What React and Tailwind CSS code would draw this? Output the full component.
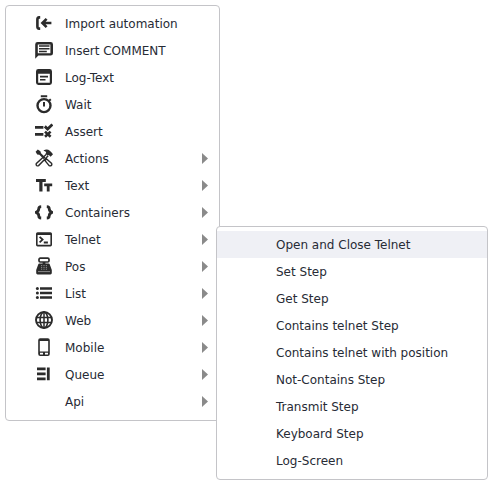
import React from "react";

const icons = {
  import: (
    <g fill="none" stroke="currentColor" strokeWidth="2.6">
      <path d="M5.2 3.4H4.2Q2.4 3.6 2.4 5.6V12.4Q2.4 14.4 4.2 14.6H5.2" />
      <path d="M16.4 9H7.6M11.6 4.8L7.4 9L11.6 13.2" />
    </g>
  ),
  comment: (
    <>
      <path
        fillRule="evenodd"
        fill="currentColor"
        d="M2.6 1H15.6Q18 1 18 3.4V12.2Q18 14.6 15.6 14.6H3.4L.2 17.8V3.4Q.2 1 2.6 1ZM2.8 3.4V12.2H15.4V3.4Z"
      />
      <path stroke="currentColor" strokeWidth="1.5" d="M4 5H14.5M4 7.7H14.5M4 10.4H11.8" />
    </>
  ),
  log: (
    <>
      <path
        fillRule="evenodd"
        fill="currentColor"
        d="M3.4 1H14.6Q17 1 17 3.4V14.6Q17 17 14.6 17H3.4Q1 17 1 14.6V3.4Q1 1 3.4 1ZM3.2 5.8V14.8H14.8V5.8Z"
      />
      <path stroke="currentColor" strokeWidth="1.6" d="M5 8.6H13M5 11.8H10.5" />
    </>
  ),
  wait: (
    <>
      <circle cx="9" cy="10.6" r="6.5" fill="none" stroke="currentColor" strokeWidth="2.4" />
      <path stroke="currentColor" strokeWidth="2" d="M5.8 1.2H12.2M9 7V11.6M13.8 6L15.8 4.2" />
    </>
  ),
  assert: (
    <g fill="none" stroke="currentColor">
      <path strokeWidth="2.8" d="M0 5.4H8.4M0 12.4H8.4" />
      <path strokeWidth="2.8" d="M9.8 4.4L12.6 7L17.4 2.4" />
      <path strokeWidth="2.6" d="M10 9.6L15.6 14.8M15.6 9.6L10 14.8" />
    </g>
  ),
  actions: (
    <>
      <path fill="currentColor" d="M8.4 1.6Q12 -.8 14.8 1.8L16.6 3.4L18 5.2L15.6 7.8L13.8 6L12.4 6.6L10.6 4.8L11.2 3Z" />
      <path fill="currentColor" d="M.6 2.8L2.8.6L5.4 2.2L6 4.2L10.4 8.6L8.8 10.2L4.4 5.8L2.2 5.4Z" />
      <path
        fill="none"
        stroke="currentColor"
        strokeWidth="1.4"
        d="M11.4 5.2L1.4 14.4Q.8 15.6 1.6 16.4Q2.5 17.2 3.6 16.6L13.2 6.8M10 11.6L11.6 10L16.4 14.2Q17.2 15.6 16.4 16.4Q15.4 17.2 14.2 16.6Z"
      />
    </>
  ),
  text: (
    <path fill="currentColor" d="M1 3H10.8V6H7.5V15.4H4.3V6H1ZM9.2 7.4H17.2V10.2H14.6V15.4H11.8V10.2H9.2Z" />
  ),
  braces: (
    <g fill="none" stroke="currentColor" strokeWidth="2.8">
      <path d="M6.2 3.6Q3.8 3.7 3.8 5.6Q3.8 8.4 1 9.3Q3.8 10.2 3.8 13Q3.8 14.9 6.2 15" />
      <path d="M11.8 3.6Q14.2 3.7 14.2 5.6Q14.2 8.4 17 9.3Q14.2 10.2 14.2 13Q14.2 14.9 11.8 15" />
    </g>
  ),
  telnet: (
    <>
      <path
        fillRule="evenodd"
        fill="currentColor"
        d="M2.6 2.2H15.4Q17 2.2 17 3.8V14.8Q17 16.4 15.4 16.4H2.6Q1 16.4 1 14.8V3.8Q1 2.2 2.6 2.2ZM2.6 5V14.8H15.4V5Z"
      />
      <path fill="none" stroke="currentColor" strokeWidth="1.8" d="M4.6 6.9L7.6 9.6L4.6 12.3M8.8 12.5H12.9" />
    </>
  ),
  pos: (
    <>
      <rect x="4" y="1.2" width="10" height="3.8" rx="1.2" fill="none" stroke="currentColor" strokeWidth="1.7" />
      <path
        fill="currentColor"
        d="M7.6 5H10.4V6.4H13.6Q14.6 6.4 14.8 7.4L16.8 13V16Q16.8 17.4 15.4 17.4H2.6Q1.2 17.4 1.2 16V13L3.2 7.4Q3.4 6.4 4.4 6.4H7.6Z"
      />
      <path stroke="#fff" strokeWidth=".9" strokeDasharray="1.2 1.2" d="M6 8.6H12.2M6 10.4H12.2M6 12.2H12.2" opacity=".5" />
      <path stroke="#fff" strokeWidth=".9" d="M3 14.6H15" opacity=".5" />
    </>
  ),
  list: (
    <>
      <path stroke="currentColor" strokeWidth="2.4" d="M5 4.5H17M5 9H17M5 13.5H17" />
      <g fill="currentColor">
        <circle cx="2.4" cy="4.5" r="1.5" />
        <circle cx="2.4" cy="9" r="1.5" />
        <circle cx="2.4" cy="13.5" r="1.5" />
      </g>
    </>
  ),
  web: (
    <g fill="none" stroke="currentColor" strokeWidth="1.9">
      <circle cx="9" cy="9" r="8" />
      <ellipse cx="9" cy="9" rx="3.9" ry="7.9" strokeWidth="1.6" />
      <path strokeWidth="1.5" d="M9 1V17M1.6 6.4H16.4M1.6 11.6H16.4" />
    </g>
  ),
  mobile: (
    <path
      fillRule="evenodd"
      fill="currentColor"
      d="M5.2 .3H12.8Q14.8 .3 14.8 2.3V16Q14.8 18 12.8 18H5.2Q3.2 18 3.2 16V2.3Q3.2 .3 5.2 .3ZM4.8 3V13.4H13.2V3ZM5 14.8V16.4H8V14.8ZM10 14.8V16.4H13V14.8Z"
    />
  ),
  queue: (
    <path fill="currentColor" d="M2 2.6H10.6V5.2H2ZM2 7.6H10.6V10.2H2ZM2 12.6H10.6V15.2H2ZM11.9 2.6H14.7V15.2H11.9Z" />
  ),
};

const telnetItems = [
  "Open and Close Telnet",
  "Set Step",
  "Get Step",
  "Contains telnet Step",
  "Contains telnet with position",
  "Not-Contains Step",
  "Transmit Step",
  "Keyboard Step",
  "Log-Screen",
];

const items = [
  { label: "Import automation", icon: "import" },
  { label: "Insert COMMENT", icon: "comment" },
  { label: "Log-Text", icon: "log" },
  { label: "Wait", icon: "wait" },
  { label: "Assert", icon: "assert" },
  { label: "Actions", icon: "actions", more: true },
  { label: "Text", icon: "text", more: true },
  { label: "Containers", icon: "braces", more: true },
  { label: "Telnet", icon: "telnet", more: true, children: telnetItems },
  { label: "Pos", icon: "pos", more: true },
  { label: "List", icon: "list", more: true },
  { label: "Web", icon: "web", more: true },
  { label: "Mobile", icon: "mobile", more: true },
  { label: "Queue", icon: "queue", more: true },
  { label: "Api", more: true },
];

const panel = "rounded border border-[#c4c4c8] bg-white pt-1 pb-[5px]";

function Submenu({ labels }) {
  return (
    <ul role="menu" className={`absolute left-full top-0 z-10 -ml-[3px] w-[272px] ${panel}`}>
      {labels.map((label, i) => (
        <li key={label} role="none">
          <button
            type="button"
            role="menuitem"
            className={`flex h-[27px] w-full items-center pl-[59px] text-left ${i === 0 ? "bg-[#eff0f5]" : ""}`}
          >
            {label}
          </button>
        </li>
      ))}
    </ul>
  );
}

function MenuItem({ item }) {
  return (
    <li role="none" className="relative">
      <button
        type="button"
        role="menuitem"
        aria-haspopup={item.more ? "menu" : undefined}
        aria-expanded={item.more ? Boolean(item.children) : undefined}
        className="flex h-[27px] w-full items-center gap-3 pl-[29px] pr-[11px] text-left"
      >
        <svg viewBox="0 0 18 19" aria-hidden="true" className="h-[19px] w-[18px] shrink-0 text-[#2b2b2b]">
          {item.icon && icons[item.icon]}
        </svg>
        <span className="flex-1">{item.label}</span>
        {item.more && (
          <svg viewBox="0 0 6 11" aria-hidden="true" className="h-[11px] w-[6px] shrink-0 text-[#8a8a8a]">
            <path fill="currentColor" d="M0 0L6 5.5L0 11Z" />
          </svg>
        )}
      </button>
      {item.children && <Submenu labels={item.children} />}
    </li>
  );
}

export default function App() {
  return (
    <main className="min-h-screen bg-white p-[5px] font-['DejaVu_Sans',sans-serif] text-xs whitespace-nowrap text-[#272b35]">
      <ul role="menu" className={`w-[215px] ${panel}`}>
        {items.map((item) => (
          <MenuItem key={item.label} item={item} />
        ))}
      </ul>
    </main>
  );
}
